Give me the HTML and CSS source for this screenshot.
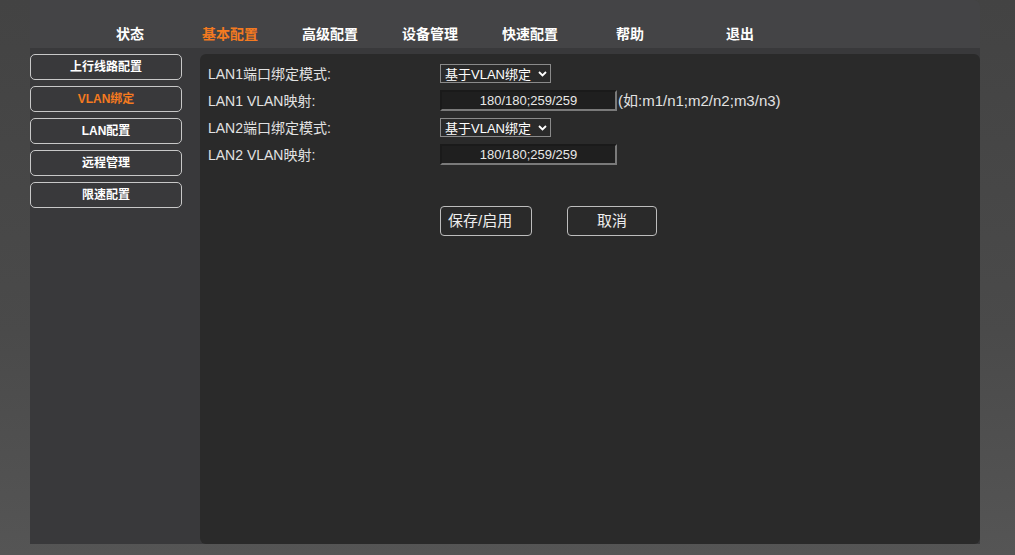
FILE: index.html
```html
<!DOCTYPE html>
<html lang="zh-CN">

<head>
  <meta charset="UTF-8">
  <title>VLAN绑定</title>
  <link rel="stylesheet" href="styles.css">
</head>

<body>
  <div class="frame">
    <ul class="topnav">
      <li>状态</li>
      <li class="active">基本配置</li>
      <li>高级配置</li>
      <li>设备管理</li>
      <li>快速配置</li>
      <li>帮助</li>
      <li class="logout">退出</li>
    </ul>

    <div class="main">
      <div class="sidebar">
        <a href="#" class="side-btn">上行线路配置</a>
        <a href="#" class="side-btn active">VLAN绑定</a>
        <a href="#" class="side-btn">LAN配置</a>
        <a href="#" class="side-btn">远程管理</a>
        <a href="#" class="side-btn">限速配置</a>
      </div>

      <div class="panel">
        <div class="form">
          <div class="row">
            <span class="label">LAN1端口绑定模式:</span>
            <span class="select">基于VLAN绑定<svg width="9" height="6" viewBox="0 0 9 6"><path d="M1 1l3.5 3.5L8 1" fill="none" stroke="#fff" stroke-width="1.8"/></svg></span>
          </div>
          <div class="row">
            <span class="label">LAN1 VLAN映射:</span>
            <span class="input">180/180;259/259</span>
            <span class="hint">(如:m1/n1;m2/n2;m3/n3)</span>
          </div>
          <div class="row">
            <span class="label">LAN2端口绑定模式:</span>
            <span class="select">基于VLAN绑定<svg width="9" height="6" viewBox="0 0 9 6"><path d="M1 1l3.5 3.5L8 1" fill="none" stroke="#fff" stroke-width="1.8"/></svg></span>
          </div>
          <div class="row">
            <span class="label">LAN2 VLAN映射:</span>
            <span class="input">180/180;259/259</span>
          </div>
        </div>

        <div class="actions">
          <a href="#" class="btn save">保存/启用</a>
          <a href="#" class="btn cancel">取消</a>
        </div>
      </div>
    </div>
  </div>
</body>

</html>
```

FILE: styles.css
```css
html,
body {
  margin: 0;
  height: 555px;
  overflow: hidden;
  background: linear-gradient(180deg, #434343 0%, #4a4a4a 60%, #555 100%);
  font-family: 'Liberation Sans', 'Noto Sans CJK SC', Arial, sans-serif;
}

.frame {
  margin-left: 30px;
  width: 950px;
  height: 544px;
  display: flex;
  flex-direction: column;
}

.topnav {
  margin: 0;
  padding: 24px 0 0 50px;
  height: 24px;
  list-style: none;
  display: flex;
  background: #444446;
  border-radius: 0 6px 0 0;
}

.topnav li {
  width: 100px;
  text-align: center;
  color: #fff;
  font-size: 14px;
  font-weight: bold;
  line-height: 20px;
}

.topnav li.active {
  color: #f47a20;
}

.topnav li.logout {
  margin-left: 10px;
}

.main {
  flex: 1;
  display: flex;
  background: #39393b;
}

.sidebar {
  width: 170px;
  padding-top: 6px;
  display: flex;
  flex-direction: column;
  gap: 6px;
}

.side-btn {
  display: block;
  width: 150px;
  height: 24px;
  line-height: 24px;
  border: 1px solid #c8c8c8;
  border-radius: 5px;
  text-align: center;
  color: #fff;
  font-size: 12px;
  font-weight: bold;
  text-decoration: none;
}

.side-btn.active {
  color: #f47a20;
}

.panel {
  flex: 1;
  margin-top: 6px;
  padding: 10px 0 0 8px;
  background: #2a2a2a;
  border-radius: 6px;
}

.form {
  display: flex;
  flex-direction: column;
  gap: 7px;
}

.row {
  display: flex;
  align-items: center;
}

.label {
  width: 232px;
  line-height: 16px;
  color: #e2e2e2;
  font-size: 14px;
}

.select {
  box-sizing: border-box;
  width: 111px;
  height: 19px;
  padding: 0 3px 0 4px;
  display: flex;
  align-items: center;
  justify-content: space-between;
  border: 1px solid #8a8a8a;
  color: #fff;
  font-size: 13px;
}

.input {
  box-sizing: border-box;
  width: 177px;
  height: 21px;
  line-height: 17px;
  text-align: center;
  background: #1f1f1f;
  border: 2px solid;
  border-color: #1a1a1a #7a7a7a #7a7a7a #1a1a1a;
  color: #e8e8e8;
  font-size: 13px;
}

.hint {
  margin-left: 1px;
  line-height: 16px;
  color: #e2e2e2;
  font-size: 15px;
}

.actions {
  margin: 41px 0 0 232px;
  display: flex;
  gap: 35px;
}

.btn {
  box-sizing: border-box;
  height: 30px;
  line-height: 28px;
  border: 1px solid #bdbdbd;
  border-radius: 4px;
  color: #eee;
  font-size: 15px;
  text-decoration: none;
}

.btn.save {
  width: 92px;
  padding-left: 7px;
}

.btn.cancel {
  width: 90px;
  text-align: center;
}
```
